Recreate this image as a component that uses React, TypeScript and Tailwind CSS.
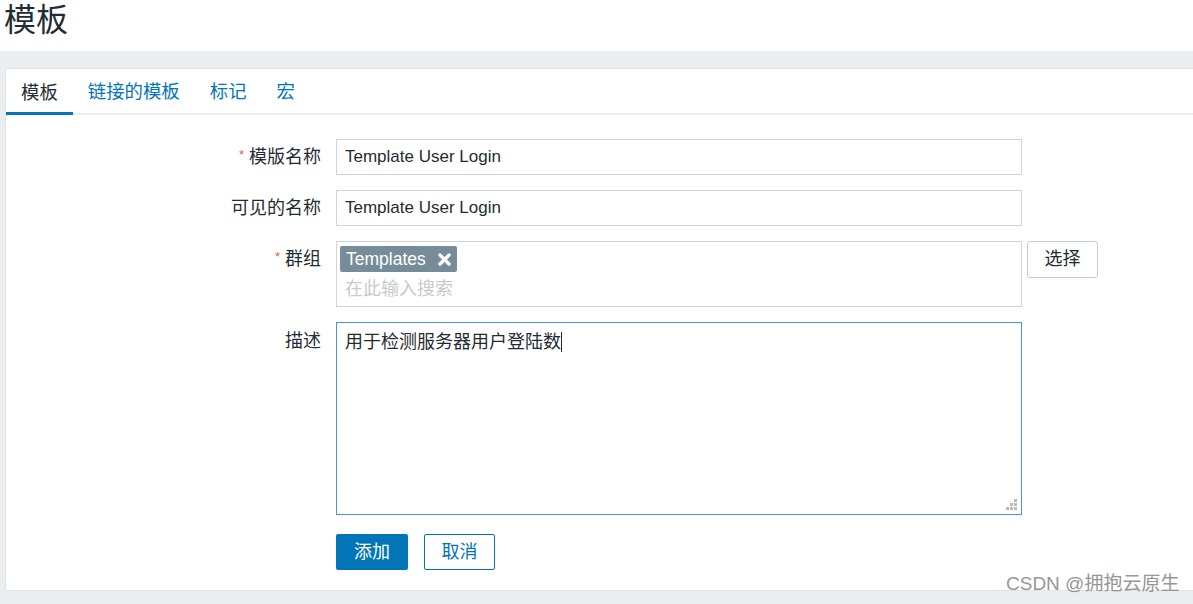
import React from 'react';

const font = { fontFamily: '"Liberation Sans", "Noto Sans CJK SC", Arial, sans-serif' };

function Label({ text, required }: { text: string; required?: boolean }) {
  return (
    <div className="w-[315px] shrink-0 flex justify-end items-start text-[18px] text-[#1f2c33] leading-[20px]">
      {required && <span className="text-[#e45959] text-[13px] mr-[5px] leading-[14px] mt-[1px]">*</span>}
      {text}
    </div>
  );
}

export default function App() {
  const tabs = ['模板', '链接的模板', '标记', '宏'];

  return (
    <div className="w-[1193px] h-[604px] overflow-hidden bg-[#ebeef0] flex flex-col relative" style={font}>
      {/* Header */}
      <header className="h-[51px] bg-white shrink-0 px-[4px] pt-[1px]">
        <h1 className="text-[32px] leading-[38px] text-[#1f2c33]">模板</h1>
      </header>

      <div className="flex-1 pl-[5px] pt-[17px] pb-[13px] min-h-0">
        <div className="h-full bg-white border border-r-0 border-[#dfe4e7] flex flex-col">
          {/* Tabs */}
          <div className="h-[46px] shrink-0 border-b-2 border-[#ebeef0] flex items-stretch">
            {tabs.map((t, i) => (
              <div
                key={t}
                className={`flex items-center text-[18.4px] px-[15px] ${
                  i === 0 ? 'text-[#1f2c33] border-b-[3px] border-[#0275b8] -mb-[2px] pt-[4px]' : 'text-[#0275b8] pt-[2px]'
                }`}
              >
                {t}
              </div>
            ))}
          </div>

          {/* Form */}
          <div className="pt-[24px] flex flex-col gap-[15px]">
            <div className="flex items-center">
              <Label text="模版名称" required />
              <div className="ml-[15px] w-[686px] h-[36px] border border-[#cdd5d9] flex items-center px-[8px] text-[17px] text-[#1f2c33]">
                Template User Login
              </div>
            </div>

            <div className="flex items-center">
              <Label text="可见的名称" />
              <div className="ml-[15px] w-[686px] h-[36px] border border-[#cdd5d9] flex items-center px-[8px] text-[17px] text-[#1f2c33]">
                Template User Login
              </div>
            </div>

            <div className="flex items-start">
              <div className="pt-[8px]">
                <Label text="群组" required />
              </div>
              <div className="ml-[15px] w-[686px] h-[66px] border border-[#cdd5d9] px-[3px] pt-[4px]">
                <div className="inline-flex items-center h-[26px] bg-[#768d99] rounded-[2px] text-white text-[17.5px] pl-[6px] pr-[6px] gap-[12px]">
                  Templates
                  <svg width="13" height="13" viewBox="0 0 13 13">
                    <path d="M2 2 L11 11 M11 2 L2 11" stroke="white" strokeWidth="3.4" strokeLinecap="round" />
                  </svg>
                </div>
                <div className="text-[18px] text-[#c5cbcf] pl-[5px] mt-[6px] leading-[22px]">在此输入搜索</div>
              </div>
              <button className="ml-[5px] w-[71px] h-[37px] border border-[#c5cdd3] rounded-[3px] bg-white text-[18px] text-[#1f2c33]">
                选择
              </button>
            </div>

            <div className="flex items-start">
              <div className="pt-[9px]">
                <Label text="描述" />
              </div>
              <div className="ml-[15px] w-[686px] h-[193px] border border-[#4796c4] relative px-[8px] pt-[8px] text-[18px] text-[#1f2c33] leading-[22px]">
                <span>用于检测服务器用户登陆数</span>
                <span className="inline-block w-[1px] h-[20px] bg-[#1f2c33] align-middle -mt-[3px]" />
                <svg className="absolute right-[3px] bottom-[3px]" width="12" height="12" viewBox="0 0 12 12">
                  <rect x="8" y="0" width="3" height="3" fill="#b9b9b9" />
                  <rect x="4" y="4" width="3" height="3" fill="#b9b9b9" />
                  <rect x="8" y="4" width="3" height="3" fill="#b9b9b9" />
                  <rect x="0" y="8" width="3" height="3" fill="#b9b9b9" />
                  <rect x="4" y="8" width="3" height="3" fill="#b9b9b9" />
                  <rect x="8" y="8" width="3" height="3" fill="#b9b9b9" />
                </svg>
              </div>
            </div>

            <div className="flex items-center pl-[330px] pt-[4px] gap-[16px]">
              <button className="w-[72px] h-[36px] bg-[#0275b8] rounded-[2px] text-white text-[18px]">添加</button>
              <button className="w-[71px] h-[36px] border border-[#0275b8] rounded-[2px] bg-white text-[#0275b8] text-[18px]">
                取消
              </button>
            </div>
          </div>
        </div>
      </div>

      {/* watermark */}
      <div className="absolute left-[1006px] top-[572px] text-[19px] leading-[24px] text-[#8c8c8c] opacity-90">
        CSDN @拥抱云原生
      </div>
    </div>
  );
}
